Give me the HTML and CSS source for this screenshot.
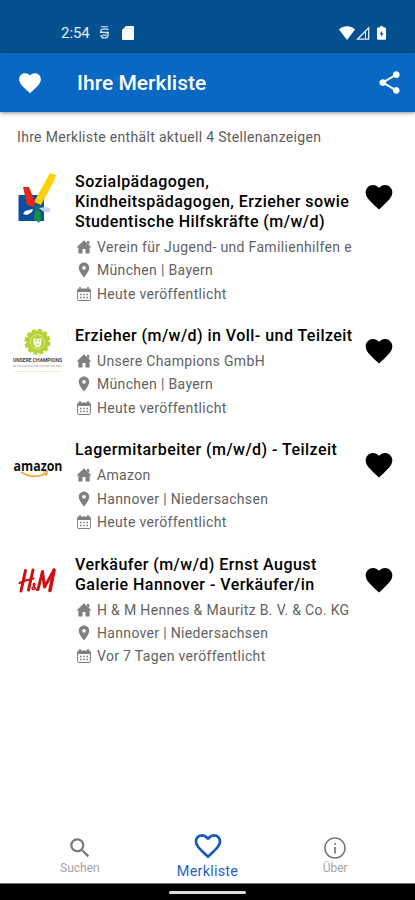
FILE: index.html
```html
<!DOCTYPE html>
<html lang="de">
<head>
<meta charset="utf-8">
<meta name="viewport" content="width=device-width, initial-scale=1">
<title>Ihre Merkliste</title>
<link rel="stylesheet" href="styles.css">
</head>
<body>
<svg class="defs" width="0" height="0">
  <symbol id="heart" viewBox="0 0 24 24"><path d="M12 21.35l-1.45-1.32C5.4 15.36 2 12.28 2 8.5 2 5.42 4.42 3 7.5 3c1.74 0 3.41.81 4.5 2.09C13.09 3.81 14.76 3 16.5 3 19.58 3 22 5.42 22 8.5c0 3.78-3.4 6.86-8.55 11.54L12 21.35z"/></symbol>
  <symbol id="home" viewBox="0 0 24 24"><path d="M10 20.500v-6h4v6h5.500v-8H22L12 3 2 12.500h2.500v8z"/><path d="M16 4h3v5l-3-2z"/></symbol>
  <symbol id="pin" viewBox="0 0 24 24"><path d="M12 2C8.13 2 5 5.13 5 9c0 5.25 7 13 7 13s7-7.75 7-13c0-3.87-3.13-7-7-7zm0 9.500a2.500 2.500 0 0 1 0-5 2.500 2.500 0 0 1 0 5z"/></symbol>
  <symbol id="calendar" viewBox="0 0 16 16"><path d="M1.100 6V4A1.500 1.500 0 0 1 2.600 2.500h10.800A1.500 1.500 0 0 1 14.900 4v2z"/><path d="M1.600 5v8.500a1 1 0 0 0 1 1h10.800a1 1 0 0 0 1-1V5" fill="none" stroke="currentColor"/><path d="M4 1v2.500M12 1v2.500" stroke="currentColor" stroke-width="1.500"/><path d="M4 8.500h8M4 11.500h8" stroke="currentColor" stroke-width="1.500" stroke-dasharray="1.600 1.600"/></symbol>
</svg>
<div class="app">
  <div class="status">
    <span class="time">2:54</span>
    <svg class="s-app" viewBox="0 0 12 15"><path d="M2 1.200h8M10.300 4.800C9 3 3 3 2 4.800c-.4 1.700 1 2.600 4 2.600s4.500.6 4 3.100c-.5 2-2 3-4 3s-3.500-1-4-3M1 7.400h10M3.500 10.300h5" fill="none" stroke="#dce9f5" stroke-width="1.300"/></svg>
    <svg class="s-card" viewBox="0 0 12 14"><path d="M4 0h7a1 1 0 0 1 1 1v12a1 1 0 0 1-1 1H1a1 1 0 0 1-1-1V4z" fill="#fff"/><path d="M4.500 1.500v2M6.800 1.500v2M9 1.500v2" stroke="#b9cde0" stroke-width=".7"/></svg>
    <span class="grow"></span>
    <svg class="s-wifi" viewBox="0 0 16 14"><path d="M0 3.500C4.500-.8 11.500-.8 16 3.500L8 14z" fill="#fff"/></svg>
    <svg class="s-cell" viewBox="0 0 14 14"><path d="M1.500 13.200H12.700V1.800z" fill="none" stroke="#e4edf6" stroke-width="1.300"/><path d="M9.500 6v6.500" stroke="#e4edf6"/></svg>
    <svg class="s-bat" viewBox="0 0 10 15"><path d="M3 0h4v1.500h2a1 1 0 0 1 1 1V14a1 1 0 0 1-1 1H1a1 1 0 0 1-1-1V2.500a1 1 0 0 1 1-1h2z" fill="#fff"/><path d="M5.700 5L3 9h1.700v3L7.200 8H5.700z" fill="#05508f"/></svg>
  </div>
  <header class="bar">
    <svg class="bar-heart"><use href="#heart"/></svg>
    <h1>Ihre Merkliste</h1>
    <svg class="share" viewBox="0 0 24 24"><path d="M18 16.080c-.76 0-1.440.3-1.960.77L8.910 12.700c.05-.23.09-.46.09-.7s-.04-.47-.09-.7l7.050-4.110c.54.5 1.250.81 2.040.81 1.660 0 3-1.340 3-3s-1.340-3-3-3-3 1.340-3 3c0 .24.04.47.09.7L8.040 9.810C7.500 9.310 6.790 9 6 9c-1.660 0-3 1.340-3 3s1.340 3 3 3c.79 0 1.500-.31 2.040-.81l7.120 4.160c-.05.21-.08.43-.08.65 0 1.610 1.310 2.920 2.920 2.920s2.920-1.310 2.920-2.920-1.310-2.920-2.920-2.920z"/></svg>
  </header>
  <main>
    <p class="summary">Ihre Merkliste enthält aktuell 4 Stellenanzeigen</p>
    <article class="job">
      <svg class="logo" viewBox="0 0 50 50"><path d="M5.500 23H31v26H5.500z" fill="#0c4f9e"/><path d="M37 1l6 2-2 6-13 24-7-3z" fill="#ffd006"/><path d="M10 15l6 0 6 15-1 5-7-2z" fill="#e2271b"/><path d="M22 38l5 0 1 8-2 5-5-4z" fill="#16933f"/><path d="M21 33l7 1-1 5-6-1z" fill="#126d70"/><path d="M20 37l-8 2-2 3 4 1 5-3z" fill="#fff"/><path d="M26 36l7-1 5 2-2 3-5 0z" fill="#c9d1f0"/></svg>
      <div class="info">
        <h2>Sozialpädagogen,<br>Kindheitspädagogen, Erzieher sowie<br>Studentische Hilfskräfte (m/w/d)</h2>
        <p><svg><use href="#home"/></svg><span>Verein für Jugend- und Familienhilfen e</span></p>
        <p><svg><use href="#pin"/></svg><span>München | Bayern</span></p>
        <p><svg class="cal"><use href="#calendar"/></svg><span>Heute veröffentlicht</span></p>
      </div>
      <svg class="fav"><use href="#heart"/></svg>
    </article>
    <article class="job">
      <svg class="logo" viewBox="0 0 50 50"><circle cx="24.500" cy="15.800" r="11.200" fill="#b4d334"/><circle cx="24.500" cy="15.800" r="11.500" fill="none" stroke="#b4d334" stroke-width="3" stroke-dasharray="4 2.020"/><circle cx="24.500" cy="15.800" r="7.200" fill="none" stroke="#e3efad" stroke-width=".8"/><path d="M20.500 11.800l2 1h4l2-1v6l-2 3.500h-4l-2-3.500z" fill="#f4f8df"/><path d="M22.500 14.800h1.300M25.500 14.800h1.300M23.500 18.300h2" stroke="#9ebc3a"/><text class="champ" x="24.500" y="35.500" textLength="49" lengthAdjust="spacingAndGlyphs">UNSERE CHAMPIONS</text><path d="M0 40h49" stroke="#aaa" stroke-width="1.200" stroke-dasharray="3 .7 1.500 .4"/><path d="M2 45.500h45" stroke="#e5e9b6" stroke-dasharray="4 .8"/></svg>
      <div class="info">
        <h2>Erzieher (m/w/d) in Voll- und Teilzeit</h2>
        <p><svg><use href="#home"/></svg><span>Unsere Champions GmbH</span></p>
        <p><svg><use href="#pin"/></svg><span>München | Bayern</span></p>
        <p><svg class="cal"><use href="#calendar"/></svg><span>Heute veröffentlicht</span></p>
      </div>
      <svg class="fav"><use href="#heart"/></svg>
    </article>
    <article class="job">
      <svg class="logo" viewBox="0 0 50 50"><text class="amazon" x="25" y="30.500" textLength="49" lengthAdjust="spacingAndGlyphs">amazon</text><path d="M8 32c8 5.500 18 5.500 25.500 1" fill="none" stroke="#f6a53a" stroke-width="1.700"/><path d="M30 32l4.500-.5-1.500 4.500" fill="none" stroke="#f6a53a" stroke-width="1.200"/></svg>
      <div class="info">
        <h2>Lagermitarbeiter (m/w/d) - Teilzeit</h2>
        <p><svg><use href="#home"/></svg><span>Amazon</span></p>
        <p><svg><use href="#pin"/></svg><span>Hannover | Niedersachsen</span></p>
        <p><svg class="cal"><use href="#calendar"/></svg><span>Heute veröffentlicht</span></p>
      </div>
      <svg class="fav"><use href="#heart"/></svg>
    </article>
    <article class="job">
      <svg class="logo" viewBox="0 0 50 50"><g fill="none" stroke="#cf1010" stroke-linecap="round" stroke-linejoin="round"><path d="M12.500 15.500L8 36M20 15L15.500 35" stroke-width="3"/><path d="M6.500 28c4-2 9-3.500 14-4.500" stroke-width="2"/><path d="M23.500 35c-3-3.500-4-6-2.500-6.500 2.500 0 0 3-1.500 4-1.500 2 .5 3 3 .5" stroke-width="1.400"/><path d="M29.500 16.500L25 34.500M29.500 17l2 15 9-16" stroke-width="3"/><path d="M41 15L37 35.500" stroke-width="3.600"/></g></svg>
      <div class="info">
        <h2>Verkäufer (m/w/d) Ernst August<br>Galerie Hannover - Verkäufer/in</h2>
        <p><svg><use href="#home"/></svg><span>H &amp; M Hennes &amp; Mauritz B. V. &amp; Co. KG</span></p>
        <p><svg><use href="#pin"/></svg><span>Hannover | Niedersachsen</span></p>
        <p><svg class="cal"><use href="#calendar"/></svg><span>Vor 7 Tagen veröffentlicht</span></p>
      </div>
      <svg class="fav"><use href="#heart"/></svg>
    </article>
  </main>
  <nav>
    <a class="tab"><svg viewBox="0 0 24 24"><path d="M15.500 14h-.79l-.28-.27A6.470 6.470 0 0 0 16 9.500 6.500 6.500 0 1 0 9.500 16c1.610 0 3.090-.59 4.230-1.570l.27.28v.79l5 4.990L20.490 19l-4.990-5zm-6 0C7.010 14 5 11.990 5 9.500S7.010 5 9.500 5 14 7.010 14 9.500 11.990 14 9.500 14z"/></svg><span>Suchen</span></a>
    <a class="tab active"><svg viewBox="0 0 24 24"><path d="M16.500 3c-1.740 0-3.410.81-4.500 2.090C10.910 3.810 9.240 3 7.500 3 4.420 3 2 5.420 2 8.500c0 3.780 3.400 6.860 8.550 11.540L12 21.350l1.450-1.320C18.600 15.360 22 12.280 22 8.500 22 5.420 19.580 3 16.500 3zm-4.400 15.550l-.1.100-.1-.1C7.140 14.240 4 11.390 4 8.500 4 6.500 5.500 5 7.500 5c1.540 0 3.040.99 3.570 2.360h1.870C13.460 5.990 14.960 5 16.500 5c2 0 3.500 1.500 3.500 3.500 0 2.890-3.140 5.740-7.900 10.050z"/></svg><span>Merkliste</span></a>
    <a class="tab"><svg viewBox="0 0 24 24"><path d="M11.200 17h1.600v-6h-1.600v6zM12 2C6.480 2 2 6.480 2 12s4.480 10 10 10 10-4.480 10-10S17.520 2 12 2zm0 18.500c-4.700 0-8.500-3.800-8.500-8.500S7.300 3.500 12 3.500s8.500 3.800 8.500 8.500-3.800 8.500-8.500 8.500zM11.200 9h1.600V7.300h-1.600V9z"/></svg><span>Über</span></a>
  </nav>
  <div class="gesture"><i></i></div>
</div>
</body>
</html>
```
FILE: styles.css
```css
* { box-sizing: border-box; margin: 0; padding: 0; }
body { font-family: Roboto, "Liberation Sans", sans-serif; background: #fff; color: #000; }
svg { display: block; flex: none; fill: currentColor; }
.defs { position: absolute; }
.app { height: 900px; display: flex; flex-direction: column; overflow: hidden; }
.status { flex: none; height: 53px; padding: 12px 29px 0 61px; background: #05508f; color: #e4edf6; display: flex; align-items: center; }
.time { width: 38px; font-size: 15px; letter-spacing: -.05px; }
.s-app { width: 11px; height: 15px; }
.s-card { width: 12px; height: 14px; margin-left: 12px; }
.grow { flex: 1; }
.s-wifi { width: 16px; height: 14px; }
.s-cell { width: 14px; height: 14px; margin-left: 1px; }
.s-bat { width: 9px; height: 14px; margin-left: 7px; }
.bar { flex: none; height: 59px; padding: 0 12px 0 17px; background: #0868c3; color: #fff; display: flex; align-items: center; box-shadow: 0 1px 4px rgba(0,0,0,.45); }
.bar-heart { width: 26px; height: 26px; }
.bar h1 { flex: 1; margin-left: 34px; font-size: 21px; font-weight: 500; letter-spacing: .02px; }
.share { width: 27px; height: 27px; }
main { flex: 1; padding: 15px 0 0 13px; }
.summary { padding-left: 4px; height: 45px; font-size: 14px; line-height: 20px; letter-spacing: .32px; color: #5c5c5c; }
.job { display: flex; margin-bottom: 21px; }
.logo { width: 50px; height: 50px; margin-right: 12px; overflow: visible; }
.info { width: 278px; overflow: hidden; }
.info h2 { font-size: 16px; line-height: 20px; font-weight: 500; letter-spacing: .45px; white-space: nowrap; margin-bottom: 3.200px; }
.info p { height: 23.350px; display: flex; align-items: center; font-size: 14px; letter-spacing: .33px; color: #626262; white-space: nowrap; }
.info p svg { width: 18px; height: 18px; margin-right: 4px; color: #808080; }
.info p .cal { width: 16px; height: 16px; margin: 0 5px 0 1px; }
.fav { width: 32px; height: 32px; margin: 9px 0 0 10px; }
.champ { font: bold 4.500px Roboto, sans-serif; text-anchor: middle; fill: #444; }
.amazon { font: 700 14.500px "Open Sans", sans-serif; text-anchor: middle; fill: #111; }
nav { flex: none; height: 58px; padding: 0 16px; display: flex; }
.tab { flex: 1; display: flex; flex-direction: column; align-items: center; padding-top: 10px; font-size: 12px; line-height: 14px; color: #a2a2a2; }
.tab svg { width: 26px; height: 26px; color: #777; }
.tab.active { padding-top: 5px; font-size: 14.500px; line-height: 19px; letter-spacing: .2px; color: #2864c4; }
.tab.active svg { width: 32px; height: 32px; color: #1658bd; }
.gesture { flex: none; height: 17px; background: #000; border-top: 1px solid #777; display: flex; justify-content: center; padding-top: 7px; }
.gesture i { width: 77px; height: 3px; border-radius: 2px; background: #ddd; }
```
